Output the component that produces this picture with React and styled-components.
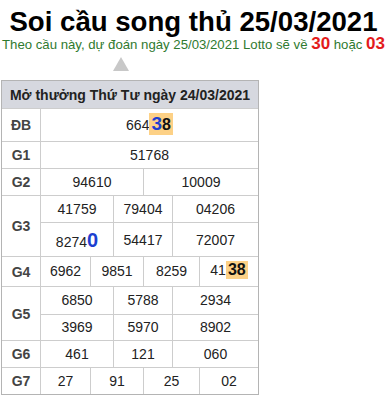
import React from "react";
import styled, { createGlobalStyle } from "styled-components";

const GlobalStyle = createGlobalStyle`
  body {
    margin: 0;
    background: #ffffff;
    font-family: "Liberation Sans", Arial, sans-serif;
  }
`;

const Page = styled.div`
  width: 387px;
  padding-top: 6px;
`;

const Title = styled.h1`
  margin: 0;
  font-size: 27.6px;
  line-height: 31px;
  font-weight: bold;
  color: #000;
  text-align: center;
`;

const Lead = styled.div`
  margin-left: 2px;
  font-size: 13.2px;
  line-height: 14px;
  color: #2f7a2f;
  white-space: nowrap;
`;

const Red = styled.b`
  display: inline-block;
  line-height: 13px;
  font-size: 17px;
  color: #e31b1b;
`;

const Arrow = styled.div`
  width: 0;
  height: 0;
  margin: 5px 0 0 113px;
  border-left: 8px solid transparent;
  border-right: 8px solid transparent;
  border-bottom: 14px solid #c8c8c8;
`;

const Table = styled.div`
  display: grid;
  grid-template-columns: 38px 49px 22px 29px 28px 26px 58px;
  grid-template-rows: 27px 32px 26px 26px 26px 33px 29px 27px 25px 26px 26px;
  gap: 1px;
  width: 256px;
  margin: 9px 0 0 1px;
  background: #cdcdcd;
  border: 1px solid #b4b4b4;
`;

const Head = styled.div`
  grid-column: 1 / -1;
  display: flex;
  align-items: center;
  justify-content: center;
  background: #d6d8df;
  font-size: 14px;
  font-weight: bold;
  color: #222;
`;

const Label = styled.div`
  grid-column: 1;
  grid-row: ${(p) => (p.rows ? `span ${p.rows}` : "auto")};
  display: flex;
  align-items: center;
  justify-content: center;
  background: #fff;
  font-size: 14px;
  font-weight: bold;
  color: #444;
`;

const Cell = styled.div`
  grid-column: span ${(p) => p.span || 1};
  display: flex;
  align-items: baseline;
  justify-content: center;
  padding-top: ${(p) => p.pad || 5}px;
  box-sizing: border-box;
  background: #fff;
  font-size: 14px;
  color: #222;
`;

const Mark = styled.span`
  background: #fdd186;
  padding: 0 2px;
  font-weight: bold;
  color: #111;
  font-size: 16px;
`;

const Blue = styled.span`
  font-weight: bold;
  color: #1d3fd0;
  font-size: ${(p) => p.size || 19}px;
`;

const rows = [
  { label: "G1", cells: [["51768", 6]] },
  { label: "G2", cells: [["94610", 3], ["10009", 3]] },
];

export default function App() {
  return (
    <Page>
      <GlobalStyle />
      <Title>Soi cầu song thủ 25/03/2021</Title>
      <Lead>
        Theo cầu này, dự đoán ngày 25/03/2021 Lotto sẽ về <Red>30</Red> hoặc <Red>03</Red>
      </Lead>
      <Arrow />
      <Table>
        <Head>Mở thưởng Thứ Tư ngày 24/03/2021</Head>

        <Label>ĐB</Label>
        <Cell span={6} pad={4}>
          664
          <Mark>
            <Blue>3</Blue>8
          </Mark>
        </Cell>

        {rows.map((r) => (
          <React.Fragment key={r.label}>
            <Label>{r.label}</Label>
            {r.cells.map(([v, s], i) => (
              <Cell key={i} span={s}>{v}</Cell>
            ))}
          </React.Fragment>
        ))}

        <Label rows={2}>G3</Label>
        <Cell span={2}>41759</Cell>
        <Cell span={2}>79404</Cell>
        <Cell span={2}>04206</Cell>
        <Cell span={2} pad={6}>
          8274<Blue size={20}>0</Blue>
        </Cell>
        <Cell span={2} pad={9}>54417</Cell>
        <Cell span={2} pad={9}>72007</Cell>

        <Label>G4</Label>
        <Cell pad={6}>6962</Cell>
        <Cell span={2} pad={6}>9851</Cell>
        <Cell span={2} pad={6}>8259</Cell>
        <Cell pad={4}>
          41<Mark>38</Mark>
        </Cell>

        <Label rows={2}>G5</Label>
        <Cell span={2}>6850</Cell>
        <Cell span={2}>5788</Cell>
        <Cell span={2}>2934</Cell>
        <Cell span={2} pad={4}>3969</Cell>
        <Cell span={2} pad={4}>5970</Cell>
        <Cell span={2} pad={4}>8902</Cell>

        <Label>G6</Label>
        <Cell span={2}>461</Cell>
        <Cell span={2}>121</Cell>
        <Cell span={2}>060</Cell>

        <Label>G7</Label>
        <Cell>27</Cell>
        <Cell span={2}>91</Cell>
        <Cell span={2}>25</Cell>
        <Cell>02</Cell>
      </Table>
    </Page>
  );
}
